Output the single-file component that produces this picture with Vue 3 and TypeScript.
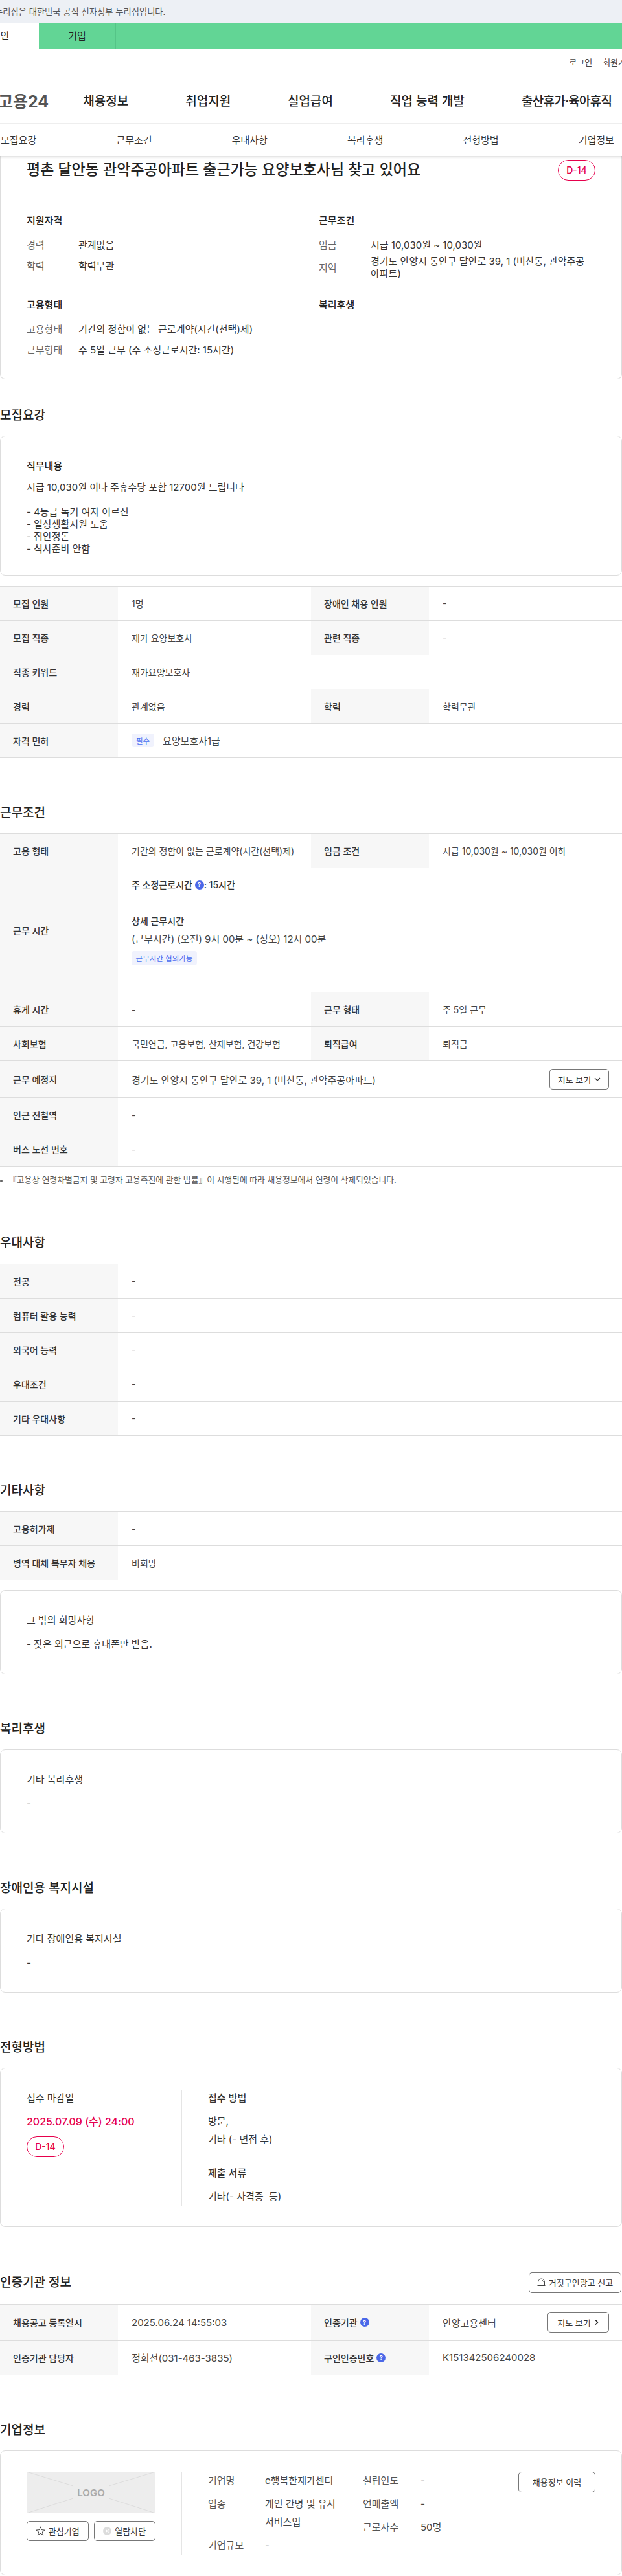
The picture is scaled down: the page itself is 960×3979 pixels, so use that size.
<script setup lang="ts">
type Cell = { label: string; value: string }
type Row = Cell[]

const mainNav = ['채용정보', '취업지원', '실업급여', '직업 능력 개발', '출산휴가·육아휴직']
const subNav = ['모집요강', '근무조건', '우대사항', '복리후생', '전형방법', '기업정보']

const duties = `시급 10,030원 이나 주휴수당 포함 12700원 드립니다

- 4등급 독거 여자 어르신
- 일상생활지원 도움
- 집안정돈
- 식사준비 안함`

const recruitRows: Row[] = [
  [{ label: '모집 인원', value: '1명' }, { label: '장애인 채용 인원', value: '-' }],
  [{ label: '모집 직종', value: '재가 요양보호사' }, { label: '관련 직종', value: '-' }],
  [{ label: '직종 키워드', value: '재가요양보호사' }],
  [{ label: '경력', value: '관계없음' }, { label: '학력', value: '학력무관' }],
]
const restRows: Row[] = [
  [{ label: '휴게 시간', value: '-' }, { label: '근무 형태', value: '주 5일 근무' }],
  [{ label: '사회보험', value: '국민연금, 고용보험, 산재보험, 건강보험' }, { label: '퇴직급여', value: '퇴직금' }],
]
const transitRows: Row[] = [
  [{ label: '인근 전철역', value: '-' }],
  [{ label: '버스 노선 번호', value: '-' }],
]
const prefRows: Row[] = [
  [{ label: '전공', value: '-' }],
  [{ label: '컴퓨터 활용 능력', value: '-' }],
  [{ label: '외국어 능력', value: '-' }],
  [{ label: '우대조건', value: '-' }],
  [{ label: '기타 우대사항', value: '-' }],
]
const etcRows: Row[] = [
  [{ label: '고용허가제', value: '-' }],
  [{ label: '병역 대체 복무자 채용', value: '비희망' }],
]
</script>

<template>
  <div class="page">
    <div class="gov-bar"><span>이 누리집은 대한민국 공식 전자정부 누리집입니다.</span></div>
    <div class="audience">
      <span class="aud-tab on">개인</span>
      <span class="aud-tab">기업</span>
    </div>
    <div class="util">
      <span>로그인</span>
      <span>회원가입</span>
    </div>
    <div class="gnb">
      <span class="logo">고용24</span>
      <span v-for="n in mainNav" :key="n">{{ n }}</span>
    </div>
    <div class="lnb">
      <span v-for="n in subNav" :key="n">{{ n }}</span>
    </div>

    <div class="card hero">
      <div class="hero-top">
        <h1>평촌 달안동 관악주공아파트 출근가능 요양보호사님 찾고 있어요</h1>
        <span class="dday">D-14</span>
      </div>
      <div class="hero-grid">
        <div>
          <h3>지원자격</h3>
          <div class="kv"><span>경력</span><p>관계없음</p></div>
          <div class="kv"><span>학력</span><p>학력무관</p></div>
        </div>
        <div>
          <h3>근무조건</h3>
          <div class="kv"><span>임금</span><p>시급 10,030원 ~ 10,030원</p></div>
          <div class="kv two"><span>지역</span><p>경기도 안양시 동안구 달안로 39, 1 (비산동, 관악주공아파트)</p></div>
        </div>
        <div>
          <h3>고용형태</h3>
          <div class="kv"><span>고용형태</span><p>기간의 정함이 없는 근로계약(시간(선택)제)</p></div>
          <div class="kv"><span>근무형태</span><p>주 5일 근무 (주 소정근로시간: 15시간)</p></div>
        </div>
        <div>
          <h3>복리후생</h3>
        </div>
      </div>
    </div>

    <h2 class="sec first">모집요강</h2>
    <div class="card note">
      <h4>직무내용</h4>
      <p class="multi">{{ duties }}</p>
    </div>
    <div class="table gap-top">
      <div v-for="(r, i) in recruitRows" :key="i" class="tr">
        <template v-for="c in r" :key="c.label">
          <div class="th">{{ c.label }}</div>
          <div class="td" :class="{ wide: r.length === 1 }">{{ c.value }}</div>
        </template>
      </div>
      <div class="tr">
        <div class="th">자격 면허</div>
        <div class="td wide big"><span class="tag req">필수</span>요양보호사1급</div>
      </div>
    </div>

    <h2 class="sec">근무조건</h2>
    <div class="table">
      <div class="tr">
        <div class="th">고용 형태</div>
        <div class="td">기간의 정함이 없는 근로계약(시간(선택)제)</div>
        <div class="th">임금 조건</div>
        <div class="td">시급 10,030원 ~ 10,030원 이하</div>
      </div>
      <div class="tr hours">
        <div class="th">근무 시간</div>
        <div class="td wide col">
          <strong class="week">주 소정근로시간 <i class="help">?</i>: 15시간</strong>
          <span class="detail">상세 근무시간</span>
          <span class="time">(근무시간) (오전) 9시 00분 ~ (정오) 12시 00분</span>
          <span class="tag nego">근무시간 협의가능</span>
        </div>
      </div>
      <div v-for="(r, i) in restRows" :key="i" class="tr">
        <template v-for="c in r" :key="c.label">
          <div class="th">{{ c.label }}</div>
          <div class="td">{{ c.value }}</div>
        </template>
      </div>
      <div class="tr place">
        <div class="th">근무 예정지</div>
        <div class="td wide between big">
          <span>경기도 안양시 동안구 달안로 39, 1 (비산동, 관악주공아파트)</span>
          <button class="btn map">지도 보기
            <svg width="10" height="10" viewBox="0 0 10 10"><path d="M1 3l4 4 4-4" fill="none" stroke="#333" stroke-width="1.1" /></svg>
          </button>
        </div>
      </div>
      <div v-for="(r, i) in transitRows" :key="i" class="tr">
        <div class="th">{{ r[0].label }}</div>
        <div class="td wide">{{ r[0].value }}</div>
      </div>
    </div>
    <p class="notice">『고용상 연령차별금지 및 고령자 고용촉진에 관한 법률』이 시행됨에 따라 채용정보에서 연령이 삭제되었습니다.</p>

    <h2 class="sec after-notice">우대사항</h2>
    <div class="table">
      <div v-for="(r, i) in prefRows" :key="i" class="tr">
        <div class="th">{{ r[0].label }}</div>
        <div class="td wide">{{ r[0].value }}</div>
      </div>
    </div>

    <h2 class="sec">기타사항</h2>
    <div class="table">
      <div v-for="(r, i) in etcRows" :key="i" class="tr">
        <div class="th">{{ r[0].label }}</div>
        <div class="td wide">{{ r[0].value }}</div>
      </div>
    </div>
    <div class="card note wish">
      <h4 class="light">그 밖의 희망사항</h4>
      <p class="one">- 잦은 외근으로 휴대폰만 받음.</p>
    </div>

    <h2 class="sec">복리후생</h2>
    <div class="card note">
      <h4 class="light">기타 복리후생</h4>
      <p class="one">-</p>
    </div>

    <h2 class="sec">장애인용 복지시설</h2>
    <div class="card note">
      <h4 class="light">기타 장애인용 복지시설</h4>
      <p class="one">-</p>
    </div>

    <h2 class="sec">전형방법</h2>
    <div class="card apply">
      <div class="apply-left">
        <h5>접수 마감일</h5>
        <p class="deadline">2025.07.09 (수) 24:00</p>
        <span class="dday">D-14</span>
      </div>
      <div class="apply-right">
        <h5>접수 방법</h5>
        <p>방문,</p>
        <p>기타 (- 면접 후)</p>
        <h5 class="next">제출 서류</h5>
        <p>기타(- 자격증&nbsp; 등)</p>
      </div>
    </div>

    <div class="sec head-row">
      <h2>인증기관 정보</h2>
      <button class="btn report">
        <svg width="13" height="13" viewBox="0 0 13 13"><path d="M1.5 11.5V6a5 5 0 0 1 10 0v5.5zM.5 11.5h12M7.5 3a3 3 0 0 1 2 2.5" fill="none" stroke="#444" stroke-width="1" /></svg>
        거짓구인광고 신고
      </button>
    </div>
    <div class="table cert">
      <div class="tr tall-row">
        <div class="th">채용공고 등록일시</div>
        <div class="td">2025.06.24 14:55:03</div>
        <div class="th">인증기관 <i class="help">?</i></div>
        <div class="td between">
          <span>안양고용센터</span>
          <button class="btn map2">지도 보기
            <svg width="8" height="10" viewBox="0 0 8 10"><path d="M2 1.5L5.5 5 2 8.5" fill="none" stroke="#222" stroke-width="1.5" /></svg>
          </button>
        </div>
      </div>
      <div class="tr">
        <div class="th">인증기관 담당자</div>
        <div class="td">정희선(031-463-3835)</div>
        <div class="th">구인인증번호 <i class="help">?</i></div>
        <div class="td">K151342506240028</div>
      </div>
    </div>

    <h2 class="sec">기업정보</h2>
    <div class="card company">
      <div class="co-left">
        <svg class="logo-box" width="199" height="64" viewBox="0 0 199 64">
          <rect width="199" height="64" fill="#ededed" />
          <path d="M0 0l72 22M199 0l-72 22M0 64l72-23M199 64l-72-23" stroke="#dcdcdc" stroke-width="1" />
          <text x="99.5" y="37.5" text-anchor="middle" class="logo-text">LOGO</text>
        </svg>
        <div class="co-btns">
          <button class="btn small">
            <svg width="15" height="15" viewBox="0 0 16 16"><path d="M8 1.5l2 4.5 4.8.5-3.6 3.2 1 4.8L8 12.1l-4.2 2.4 1-4.8L1.2 6.5 6 6z" fill="none" stroke="#444" stroke-width="1.1" /></svg>
            관심기업
          </button>
          <button class="btn small">
            <svg width="13" height="13" viewBox="0 0 13 13"><circle cx="6.5" cy="6.5" r="6.5" fill="#dcdcdc" /><path d="M4.3 4.3l4.4 4.4M8.7 4.3l-4.4 4.4" stroke="#fff" stroke-width="1.1" /></svg>
            열람차단
          </button>
        </div>
      </div>
      <div class="co-info">
        <div class="one-col">
          <div class="co-kv"><span>기업명</span><p>e행복한재가센터</p></div>
          <div class="co-kv"><span>업종</span><p>개인 간병 및 유사 서비스업</p></div>
          <div class="co-kv"><span>기업규모</span><p>-</p></div>
        </div>
        <div class="two-col">
          <div class="co-kv"><span>설립연도</span><p>-</p></div>
          <div class="co-kv"><span>연매출액</span><p>-</p></div>
          <div class="co-kv"><span>근로자수</span><p>50명</p></div>
        </div>
        <button class="btn history">채용정보 이력</button>
      </div>
    </div>
  </div>
</template>

<style scoped>
* {
  box-sizing: border-box;
}
.page {
  width: 960px;
  height: 3979px;
  overflow: hidden;
  font-family: Inter, "Noto Sans CJK KR", sans-serif;
  font-size: 15px;
  color: #333;
  background: #fff;
}
h1, h2, h3, h4, h5, p {
  margin: 0;
}

/* top bars */
.gov-bar {
  height: 36px;
  line-height: 36px;
  background: #edf0f5;
  font-size: 13.3px;
  color: #555;
  white-space: nowrap;
}
.gov-bar span {
  margin-left: -24px;
  display: inline-block;
}
.audience {
  display: flex;
  height: 40px;
  background: #62d595;
  margin-left: -59px;
  font-size: 15px;
  line-height: 40px;
  color: #222;
}
.aud-tab {
  width: 119px;
  text-align: center;
  border-right: 1px solid #55c487;
}
.aud-tab.on {
  background: #fff;
  border-right: 0;
}
.util {
  display: flex;
  justify-content: flex-end;
  gap: 16px;
  margin-right: -18px;
  padding-top: 10px;
  height: 43px;
  font-size: 13px;
  line-height: 20px;
  color: #444;
}
.gnb {
  display: flex;
  align-items: center;
  gap: 88px;
  height: 73px;
  border-bottom: 2px solid #eee;
  font-size: 19px;
  font-weight: 500;
  color: #222;
  white-space: nowrap;
}
.gnb span:last-child {
  letter-spacing: -0.7px;
}
.logo {
  margin-left: -3px;
  margin-right: -35px;
  font-size: 25px;
  font-weight: 700;
  color: #555;
}
.lnb {
  position: relative;
  display: grid;
  grid-template-columns: repeat(6, 178.33px);
  height: 49px;
  margin-left: -60.5px;
  width: 1070px;
  line-height: 49px;
  text-align: center;
  color: #333;
  box-shadow: 60px 2px 3px rgba(0, 0, 0, 0.12);
  background: #fff;
}

/* cards */
.card {
  border: 1px solid #ddd;
  border-radius: 8px;
  background: #fff;
}
.hero {
  height: 345px;
  border-top: 0;
  border-top-left-radius: 0;
  border-top-right-radius: 0;
  padding: 6px 40px 0;
}
.hero-top {
  display: flex;
  justify-content: space-between;
  align-items: center;
  height: 56px;
  padding-bottom: 24px;
  border-bottom: 1px solid #e5e5e5;
}
h1 {
  font-size: 23px;
  font-weight: 500;
  line-height: 31px;
  color: #222;
}
.dday {
  display: inline-flex;
  align-items: center;
  justify-content: center;
  width: 58px;
  height: 32px;
  border: 1px solid #e6004c;
  border-radius: 16px;
  font-size: 14px;
  font-weight: 500;
  color: #e6004c;
}
.hero-grid {
  display: grid;
  grid-template-columns: 451px 426px;
  padding-top: 27px;
}
.hero-grid h3 {
  height: 22px;
  line-height: 22px;
  margin-bottom: 9px;
  font-size: 15px;
  font-weight: 500;
  color: #222;
}
.hero-grid > div:nth-child(1),
.hero-grid > div:nth-child(2) {
  min-height: 130px;
}
.kv {
  display: flex;
  align-items: center;
  min-height: 32px;
  font-size: 15px;
}
.kv.two {
  min-height: 40px;
  line-height: 19px;
}
.kv.two p {
  width: 338px;
}
.kv span {
  width: 80px;
  flex-shrink: 0;
  color: #666;
}
.kv p {
  color: #333;
}

.sec {
  margin-top: 70px;
  margin-bottom: 16.5px;
  height: 30px;
  line-height: 30px;
  font-size: 19px;
  font-weight: 500;
  color: #222;
}
.sec.first {
  margin-top: 40.5px;
}
.sec.after-notice {
  margin-top: 72px;
}
.head-row {
  display: flex;
  justify-content: space-between;
  align-items: flex-start;
  margin-bottom: 17px;
  height: 32px;
}
.head-row h2 {
  font-size: 19px;
  font-weight: 500;
  line-height: 32px;
}

.note {
  padding: 35px 40px 32px;
}
.note h4 {
  height: 22px;
  line-height: 22px;
  margin-bottom: 11.5px;
  font-size: 15px;
  font-weight: 500;
  color: #222;
}
.note h4.light {
  font-weight: 400;
  color: #333;
}
.multi {
  white-space: pre-line;
  line-height: 19px;
  margin-bottom: -1px;
}
.one {
  line-height: 27px;
}
.gap-top {
  margin-top: 16px;
}
.wish {
  margin-top: 15px;
}

/* tables */
.table {
  border-top: 1px solid #ddd;
  font-size: 14px;
}
.tr {
  display: flex;
  height: 53px;
  border-bottom: 1px solid #ddd;
}
.th {
  display: flex;
  align-items: center;
  gap: 4px;
  width: 182px;
  flex-shrink: 0;
  padding-left: 20px;
  background: #f7f7f7;
  font-weight: 500;
  color: #333;
}
.td {
  display: flex;
  align-items: center;
  width: 298px;
  flex-shrink: 0;
  padding-left: 21px;
  color: #444;
}
.td.wide {
  width: 778px;
}
.td.big,
.cert .td {
  font-size: 15px;
}
.between {
  justify-content: space-between;
  padding-right: 20px;
}
.hours {
  height: 192px;
}
.col {
  flex-direction: column;
  align-items: flex-start;
  padding-top: 14px;
}
.week {
  font-weight: 500;
  color: #333;
  line-height: 24px;
  display: flex;
  align-items: center;
  white-space: pre;
}
.detail {
  margin-top: 32px;
  line-height: 24px;
  font-weight: 500;
  color: #333;
}
.time {
  margin-top: 4px;
  line-height: 24px;
  font-size: 15px;
  color: #444;
}
.tag {
  display: inline-flex;
  align-items: center;
  justify-content: center;
  background: #f0f2fd;
  color: #4b6bf0;
  border-radius: 4px;
  font-size: 11.5px;
}
.tag.req {
  width: 35px;
  height: 21px;
  margin-right: 13px;
}
.tag.nego {
  margin-top: 6px;
  width: 101px;
  height: 22px;
}
.help {
  display: inline-flex;
  align-items: center;
  justify-content: center;
  width: 14px;
  height: 14px;
  border-radius: 50%;
  background: #4b68e8;
  color: #fff;
  font-size: 9px;
  font-style: normal;
  font-weight: 700;
}
.place {
  height: 57px;
}
.tall-row {
  height: 56px;
}
.notice {
  position: relative;
  margin-top: 11px;
  padding-left: 13px;
  height: 20px;
  line-height: 20px;
  font-size: 12.8px;
  color: #555;
  white-space: nowrap;
}
.notice::before {
  content: "";
  position: absolute;
  left: 0;
  top: 9px;
  width: 4px;
  height: 4px;
  border-radius: 50%;
  background: #666;
}

/* buttons */
.btn {
  display: inline-flex;
  align-items: center;
  justify-content: center;
  gap: 5px;
  border: 1px solid #777;
  border-radius: 5px;
  background: #fff;
  padding: 0;
  font-family: inherit;
  font-size: 13px;
  color: #333;
  white-space: nowrap;
}
.map {
  width: 92px;
  height: 32px;
}
.map2 {
  width: 95px;
  height: 32px;
}
.report {
  width: 143px;
  height: 32px;
  margin-right: 1px;
}
.small {
  width: 96px;
  height: 31px;
}
.history {
  width: 119px;
  height: 32px;
  margin-left: auto;
}

/* apply */
.apply {
  display: flex;
  height: 245.5px;
  padding: 33px 40px;
}
.apply-left {
  width: 240px;
  height: 179px;
  border-right: 1px solid #e5e5e5;
}
.apply-right {
  padding-left: 40px;
}
h5 {
  height: 25px;
  line-height: 25px;
  font-size: 15px;
  font-weight: 500;
  color: #333;
}
.apply-left h5 {
  font-weight: 400;
}
.apply-right h5 {
  margin-bottom: 9.5px;
}
.apply-right h5.next {
  margin-top: 25.5px;
}
.apply-right p {
  line-height: 28px;
  white-space: pre;
}
.deadline {
  margin-top: 9.5px;
  line-height: 28px;
  font-size: 16px;
  font-weight: 500;
  color: #e6004c;
}
.apply-left .dday {
  margin-top: 9px;
}

/* company */
.company {
  display: flex;
  height: 193px;
  padding: 31.5px 40px 0;
}
.co-left {
  width: 240px;
  height: 128px;
  border-right: 1px solid #e5e5e5;
}
.logo-box {
  display: block;
}
.logo-text {
  font-size: 15px;
  font-weight: 600;
  fill: #aaa;
  font-family: Inter, sans-serif;
}
.co-btns {
  display: flex;
  gap: 8px;
  width: 199px;
  margin-top: 12.5px;
}
.co-info {
  display: flex;
  flex: 1;
  padding-left: 40px;
  align-items: flex-start;
}
.co-kv {
  display: flex;
  margin-bottom: 8px;
  line-height: 28px;
  color: #444;
}
.co-kv span {
  flex-shrink: 0;
  color: #555;
}
.one-col {
  width: 239px;
}
.one-col span {
  width: 88px;
}
.one-col p {
  width: 120px;
}
.two-col span {
  width: 89px;
}
</style>

<style>
body {
  margin: 0;
}
</style>
